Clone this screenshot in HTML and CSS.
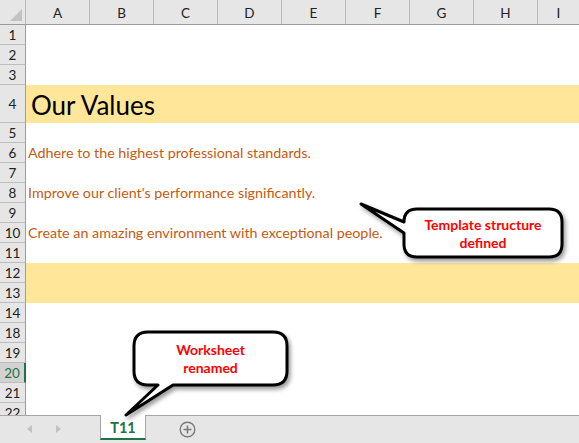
FILE: index.html
```html
<!DOCTYPE html>
<html>
<head>
<meta charset="utf-8">
<link rel="stylesheet" href="styles.css">
</head>
<body>
<div class="app">
  <div class="sheet">
    <div class="colhead">
      <div class="corner"><span class="tri"></span></div>
      <div class="ch">A</div><div class="ch">B</div><div class="ch">C</div><div class="ch">D</div>
      <div class="ch">E</div><div class="ch">F</div><div class="ch">G</div><div class="ch">H</div>
      <div class="ch last">I</div>
    </div>
    <div class="row"><div class="rh">1</div><div class="cells"></div></div>
    <div class="row"><div class="rh">2</div><div class="cells"></div></div>
    <div class="row"><div class="rh">3</div><div class="cells"></div></div>
    <div class="row tall"><div class="rh">4</div><div class="cells fill title">Our Values</div></div>
    <div class="row"><div class="rh">5</div><div class="cells"></div></div>
    <div class="row"><div class="rh">6</div><div class="cells value">Adhere to the highest professional standards.</div></div>
    <div class="row"><div class="rh">7</div><div class="cells"></div></div>
    <div class="row"><div class="rh">8</div><div class="cells value">Improve our client's performance significantly.</div></div>
    <div class="row"><div class="rh">9</div><div class="cells"></div></div>
    <div class="row"><div class="rh">10</div><div class="cells value">Create an amazing environment with exceptional people.</div></div>
    <div class="row"><div class="rh">11</div><div class="cells"></div></div>
    <div class="row"><div class="rh">12</div><div class="cells fill"></div></div>
    <div class="row"><div class="rh">13</div><div class="cells fill"></div></div>
    <div class="row"><div class="rh">14</div><div class="cells"></div></div>
    <div class="row"><div class="rh">18</div><div class="cells"></div></div>
    <div class="row"><div class="rh">19</div><div class="cells"></div></div>
    <div class="row"><div class="rh sel">20</div><div class="cells"></div></div>
    <div class="row"><div class="rh">21</div><div class="cells"></div></div>
    <div class="row"><div class="rh">22</div><div class="cells"></div></div>
  </div>
  <div class="tabbar">
    <div class="nav">
      <span class="arrow left"></span>
      <span class="arrow right"></span>
    </div>
    <div class="tab">T11</div>
    <div class="add">
      <svg width="17" height="17" viewBox="0 0 17 17"><circle cx="8.5" cy="8.5" r="7.3" fill="none" stroke="#7a7a7a" stroke-width="1.4"/><path d="M8.5 4.5v8M4.5 8.5h8" stroke="#7a7a7a" stroke-width="1.6"/></svg>
    </div>
  </div>

  <svg class="callouts" width="579" height="443" viewBox="0 0 579 443">
    <defs>
      <filter id="sh" x="-20%" y="-20%" width="140%" height="160%">
        <feDropShadow dx="2" dy="3" stdDeviation="2" flood-color="#000" flood-opacity="0.4"/>
      </filter>
    </defs>
    <path filter="url(#sh)" d="M417,209 H549 Q562,209 562,222 V244 Q562,257 549,257 H417 Q404,257 404,244 V233 L361,204 L404,222 Q404,209 417,209 Z" fill="#fff" stroke="#000" stroke-width="3" stroke-linejoin="round"/>
    <path filter="url(#sh)" d="M148,332 H273 Q287,332 287,346 V371 Q287,385 273,385 H173 L126,415 L158,385 H148 Q134,385 134,371 V346 Q134,332 148,332 Z" fill="#fff" stroke="#000" stroke-width="3" stroke-linejoin="round"/>
  </svg>
  <div class="note note1">Template structure<br>defined</div>
  <div class="note note2">Worksheet<br>renamed</div>
</div>
</body>
</html>
```
FILE: styles.css
```css
* { box-sizing: border-box; }
html, body { margin: 0; padding: 0; background: #fff; }
.app {
  position: relative;
  width: 579px;
  height: 443px;
  overflow: hidden;
  font-family: Lato, "Open Sans", sans-serif;
}
.sheet {
  height: 415px;
  overflow: hidden;
  display: flex;
  flex-direction: column;
}
.colhead {
  display: flex;
  height: 25px;
  flex: none;
  background: #e6e6e6;
  border-bottom: 1px solid #9c9c9c;
}
.corner {
  width: 26px;
  flex: none;
  border-right: 1px solid #bdbdbd;
  position: relative;
}
.tri {
  position: absolute;
  right: 3px;
  bottom: 3px;
  width: 0;
  height: 0;
  border-left: 12px solid transparent;
  border-bottom: 12px solid #c3c3c3;
}
.ch {
  width: 64px;
  flex: none;
  border-right: 1px solid #bdbdbd;
  display: flex;
  align-items: center;
  justify-content: center;
  font-size: 13.5px;
  color: #222;
  padding-top: 2px;
}
.ch.last { flex: 1; border-right: none; }
.row {
  display: flex;
  height: 20px;
  flex: none;
}
.row.tall { height: 38px; }
.rh {
  width: 26px;
  flex: none;
  background: #e6e6e6;
  border-right: 1px solid #9c9c9c;
  border-bottom: 1px solid #bdbdbd;
  display: flex;
  align-items: center;
  justify-content: center;
  font-size: 13.5px;
  color: #222;
  padding-top: 1px;
}
.rh.sel {
  background: #d2d2d2;
  color: #217346;
  border-right: 2px solid #217346;
}
.cells {
  flex: 1;
  display: flex;
  align-items: flex-end;
  white-space: nowrap;
}
.fill { background: #ffe699; }
.title {
  font-size: 26px;
  color: #000;
  padding-left: 5px;
  padding-bottom: 3px;
  line-height: 30px;
}
.value {
  font-size: 14.3px;
  color: #c55a11;
  padding-left: 2px;
  padding-bottom: 1px;
  line-height: 18px;
}
.tabbar {
  height: 28px;
  background: #e6e6e6;
  border-top: 1px solid #a6a6a6;
  display: flex;
  align-items: flex-start;
}
.nav {
  width: 100px;
  flex: none;
  height: 27px;
  position: relative;
}
.arrow {
  position: absolute;
  top: 9px;
  width: 0;
  height: 0;
  border-top: 4px solid transparent;
  border-bottom: 4px solid transparent;
}
.arrow.left { left: 27px; border-right: 5px solid #c0c0c0; }
.arrow.right { left: 56px; border-left: 5px solid #c0c0c0; }
.tab {
  width: 46px;
  height: 25px;
  margin-top: -1px;
  background: #fff;
  border-left: 1px solid #a6a6a6;
  border-right: 1px solid #a6a6a6;
  border-bottom: 2px solid #217346;
  display: flex;
  align-items: center;
  justify-content: center;
  font-size: 14.5px;
  font-weight: bold;
  color: #217346;
  padding-top: 1px;
}
.add {
  margin-left: 33px;
  margin-top: 5px;
  width: 17px;
  height: 17px;
}
.add svg { display: block; }
.callouts {
  position: absolute;
  left: 0;
  top: 0;
  pointer-events: none;
}
.note {
  position: absolute;
  text-align: center;
  color: #ff0000;
  font-weight: bold;
  font-size: 14px;
  line-height: 18px;
}
.note1 { left: 404px; top: 216px; width: 158px; }
.note2 { left: 134px; top: 341px; width: 153px; }
```
